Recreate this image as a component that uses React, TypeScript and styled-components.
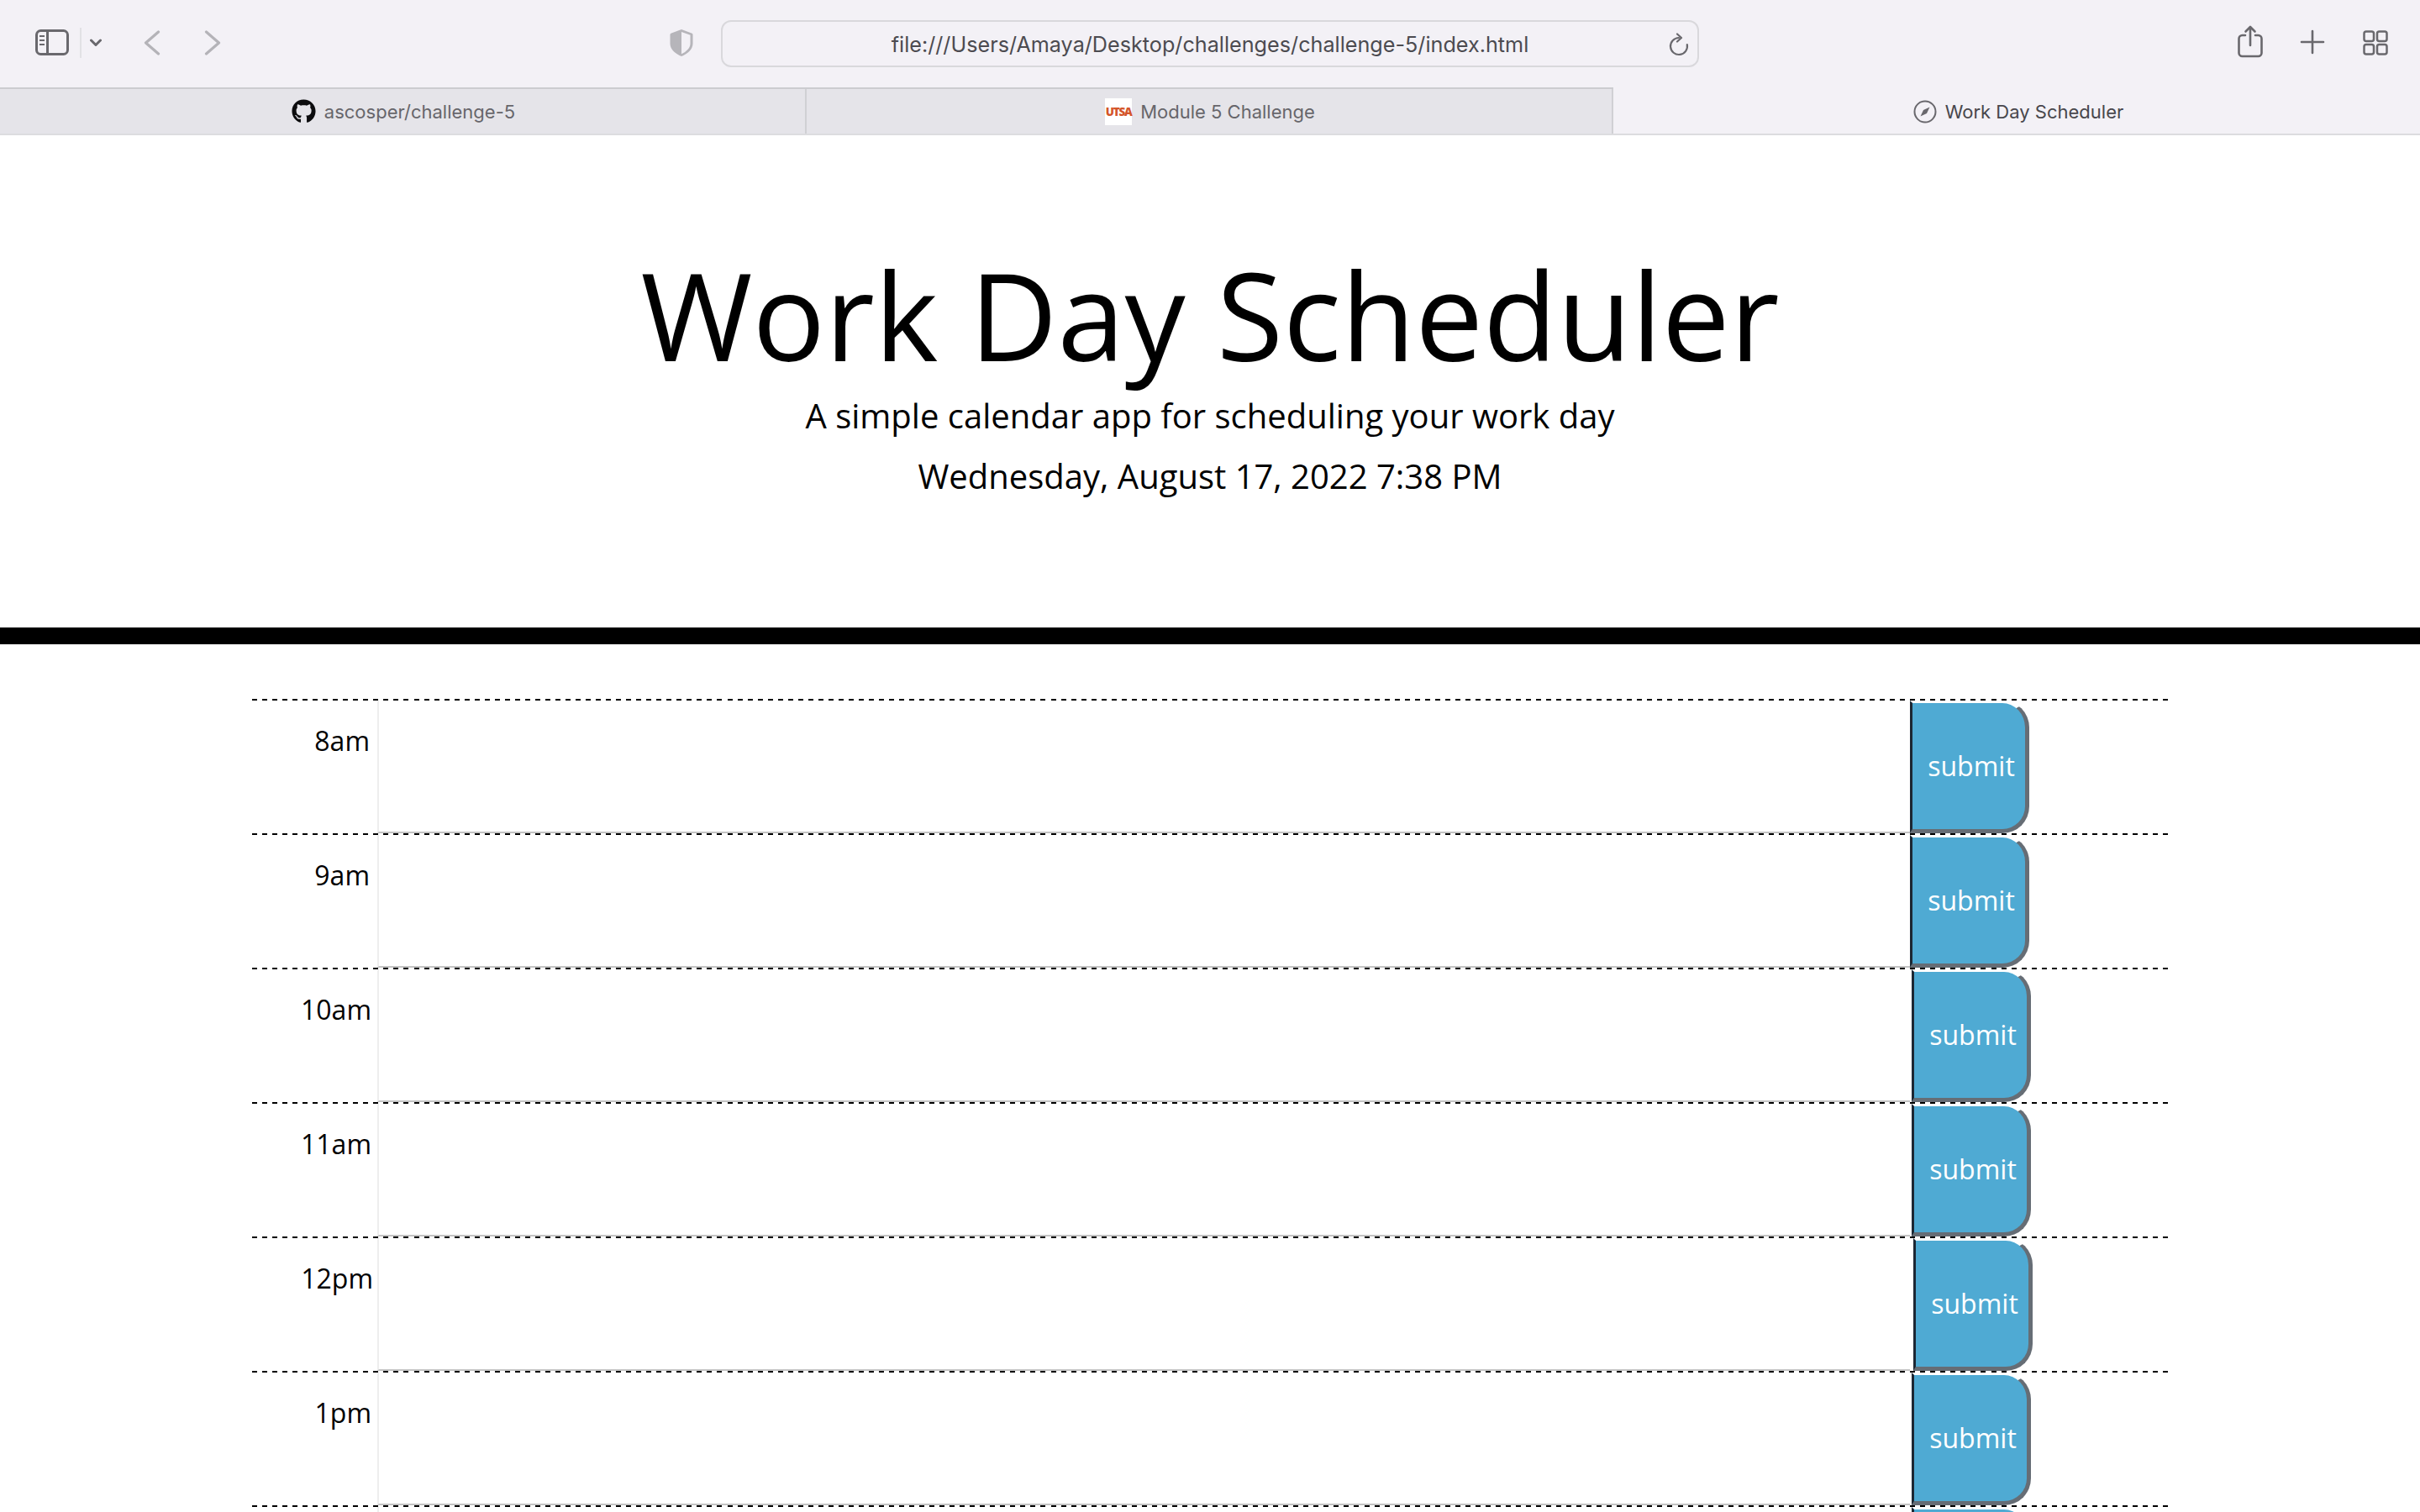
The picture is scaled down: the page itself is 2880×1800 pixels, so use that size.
import React from "react";
import styled, { createGlobalStyle } from "styled-components";
import { FaGithub } from "react-icons/fa";

const Global = createGlobalStyle`
  html, body { margin: 0; padding: 0; height: 100%; overflow: hidden; background: #fff; }
  #root { height: 100%; }
  * { box-sizing: border-box; }
`;

const Page = styled.div`
  display: flex;
  flex-direction: column;
  height: 1800px;
  overflow: hidden;
  font-family: "Open Sans", sans-serif;
  color: #000;
`;

const Toolbar = styled.div`
  height: 104px;
  flex: none;
  display: grid;
  grid-template-columns: 858px 1164px 1fr;
  align-items: center;
  background: #f3f1f6;
`;

const LeftTools = styled.div`
  display: flex;
  align-items: center;
  height: 100%;
  padding: 0 0 2px 42px;
`;

const RightTools = styled.div`
  display: flex;
  align-items: center;
  justify-content: flex-end;
  padding-right: 38px;
`;

const ToolIcon = styled.svg<{ $ml?: number; $lift?: number }>`
  display: block;
  flex: none;
  margin-left: ${(p) => p.$ml ?? 0}px;
  margin-bottom: ${(p) => p.$lift ?? 0}px;
`;

const ToolDivider = styled.span`
  width: 2px;
  height: 36px;
  flex: none;
  margin-left: 13px;
  background: #e2e1e5;
`;

const UrlBar = styled.div`
  position: relative;
  height: 56px;
  margin-top: -1px;
  padding-top: 2px;
  border: 2px solid #d9d8dc;
  border-radius: 12px;
  display: flex;
  align-items: center;
  justify-content: center;
  font-family: Inter, "Liberation Sans", sans-serif;
  font-size: 25.2px;
  color: #4c4b50;
`;

const Reload = styled.svg`
  position: absolute;
  right: 8px;
  top: 13px;
`;

const TabBar = styled.div`
  height: 57px;
  flex: none;
  display: grid;
  grid-template-columns: repeat(3, 960px);
  background: #e5e4e9;
  border-top: 2px solid #ccccd0;
  border-bottom: 2px solid #dcdcdf;
`;

const Tab = styled.div<{ $active?: boolean }>`
  display: flex;
  align-items: center;
  justify-content: center;
  gap: 10px;
  padding: ${(p) => (p.$active ? "2px 0 0 4px" : "0 0 0 2px")};
  font-family: Inter, "Liberation Sans", sans-serif;
  font-size: 22px;
  color: ${(p) => (p.$active ? "#48474c" : "#67666b")};
  background: ${(p) => (p.$active ? "#f3f1f6" : "transparent")};
  border-right: ${(p) => (p.$active ? "none" : "2px solid #d0d0d4")};
  margin-top: ${(p) => (p.$active ? "-2px" : "0")};
`;

const UtsaBadge = styled.span`
  width: 32px;
  height: 32px;
  background: #fff;
  color: #d4552a;
  font-family: "Open Sans", sans-serif;
  font-size: 13.5px;
  font-weight: 800;
  letter-spacing: -1.2px;
  display: flex;
  align-items: center;
  justify-content: center;
`;

const Header = styled.header`
  height: 606px;
  flex: none;
  padding-top: 127px;
  text-align: center;
  border-bottom: 20px solid #000;
`;

const Title = styled.h1`
  margin: 0 0 4px;
  font-size: 144px;
  font-weight: 400;
  line-height: 1.2;
`;

const Lead = styled.p`
  margin: 0;
  font-size: 40px;
  line-height: 60px;
`;

const DateLine = styled.p`
  margin: 12px 0 0;
  font-size: 40px;
  line-height: 60px;
`;

const Schedule = styled.main`
  width: 2280px;
  margin: 65px auto 0;
  flex: none;
`;

const Row = styled.section`
  height: 160px;
  display: flex;
  padding-top: 2px;
  background: repeating-linear-gradient(90deg, #000 0 6px, transparent 6px 12.032px) top left / 100% 2px no-repeat;
`;

const Hour = styled.div<{ $pad: number }>`
  width: 149px;
  flex: none;
  padding: 24px ${(p) => p.$pad}px 0 0;
  text-align: right;
  font-size: 32px;
  line-height: 48px;
`;

const Entry = styled.textarea`
  flex: 1;
  min-width: 0;
  display: block;
  height: 158px;
  padding: 8px;
  border: none;
  border-left: 2px solid #eeeeee;
  border-bottom: 2px solid #c4c4c4;
  outline: none;
  resize: none;
  background: transparent;
  font: inherit;
`;

const Submit = styled.button<{ $offset: number }>`
  flex: none;
  width: 142px;
  height: 158px;
  margin: 0 ${(p) => 165 - p.$offset}px 0 ${(p) => p.$offset}px;
  padding: 0 0 0 6px;
  border-style: solid;
  border-width: 3px 5px 5px 3px;
  border-color: #fff #666d75 #666d75 #1c2733;
  border-radius: 0 32px 32px 0;
  background: #4faad3;
  color: #fff;
  font-family: "Open Sans", sans-serif;
  font-size: 32px;
  line-height: 48px;
`;

const hours = [
  { label: "8am", pad: 9, offset: 0 },
  { label: "9am", pad: 9, offset: 0 },
  { label: "10am", pad: 7, offset: 2 },
  { label: "11am", pad: 7, offset: 2 },
  { label: "12pm", pad: 5, offset: 4 },
  { label: "1pm", pad: 7, offset: 2 },
];

export default function App() {
  return (
    <Page>
      <Global />
      <Toolbar>
        <LeftTools>
          <ToolIcon width="40" height="32" viewBox="0 0 40 32" fill="none" stroke="#69686d" strokeWidth="3">
            <rect x="1.5" y="1.5" width="37" height="28" rx="5" />
            <path d="M14.5 1.5v28" />
            <path d="M5 8h6M5 13h6M5 18h6" strokeWidth="2" />
          </ToolIcon>
          <ToolDivider />
          <ToolIcon $ml={10} width="14" height="10" viewBox="0 0 14 10" fill="none" stroke="#69686d" strokeWidth="3" strokeLinecap="round" strokeLinejoin="round">
            <path d="M1.500 2L7 7.500 12.500 2" />
          </ToolIcon>
          <ToolIcon $ml={50} width="20" height="30" viewBox="0 0 20 30" fill="none" stroke="#b4b3b8" strokeWidth="3.200" strokeLinecap="round" strokeLinejoin="round">
            <path d="M17.500 2L2.500 15l15 13" />
          </ToolIcon>
          <ToolIcon $ml={52} width="20" height="30" viewBox="0 0 20 30" fill="none" stroke="#b4b3b8" strokeWidth="3.200" strokeLinecap="round" strokeLinejoin="round">
            <path d="M2.500 2l15 13-15 13" />
          </ToolIcon>
          <ToolIcon $ml={534} width="28" height="34" viewBox="0 0 28 34" fill="none">
            <path d="M14 1L26 5.500c1 .4 1.500 1 1.500 2V18c0 7-7 12.500-13.500 15C7.500 30.500.5 25 .5 18V7.500c0-1 .5-1.600 1.500-2z" fill="#b6b5ba" />
            <path d="M14 4l10.500 3.800V18c0 5.500-5.500 10-10.500 12.300z" fill="#f3f1f6" />
          </ToolIcon>
        </LeftTools>
        <UrlBar>
          file:///Users/Amaya/Desktop/challenges/challenge-5/index.html
          <Reload width="26" height="30" viewBox="0 0 26 30" fill="none" stroke="#69686d" strokeWidth="2.200" strokeLinecap="round" strokeLinejoin="round">
            <path d="M21.800 14A10 10 0 1 1 12 6" />
            <path d="M10 1.500L15 6l-5 4.500" />
          </Reload>
        </UrlBar>
        <RightTools>
          <ToolIcon $lift={5} width="30" height="39" viewBox="0 0 30 39" fill="none" stroke="#69686d" strokeWidth="2.600" strokeLinecap="round" strokeLinejoin="round">
            <path d="M9 12H5.500a4 4 0 0 0-4 4V33a4 4 0 0 0 4 4h19a4 4 0 0 0 4-4V16a4 4 0 0 0-4-4H21" />
            <path d="M15 24V2.500M9.500 7.500L15 2l5.500 5.500" />
          </ToolIcon>
          <ToolIcon $ml={44} $lift={4} width="30" height="30" viewBox="0 0 30 30" fill="none" stroke="#69686d" strokeWidth="2.600" strokeLinecap="round">
            <path d="M15 2v26M2 15h26" />
          </ToolIcon>
          <ToolIcon $ml={45} $lift={2} width="30" height="30" viewBox="0 0 30 30" fill="none" stroke="#69686d" strokeWidth="2.500">
            <rect x="1.500" y="1.500" width="11.500" height="11.500" rx="2.500" />
            <rect x="17" y="1.500" width="11.500" height="11.500" rx="2.500" />
            <rect x="1.500" y="17" width="11.500" height="11.500" rx="2.500" />
            <rect x="17" y="17" width="11.500" height="11.500" rx="2.500" />
          </ToolIcon>
        </RightTools>
      </Toolbar>
      <TabBar>
        <Tab>
          <FaGithub size={29} color="#0c0c0e" />
          ascosper/challenge-5
        </Tab>
        <Tab>
          <UtsaBadge>UTSA</UtsaBadge>
          Module 5 Challenge
        </Tab>
        <Tab $active>
          <ToolIcon width="28" height="28" viewBox="0 0 28 28" fill="none">
            <circle cx="14" cy="14" r="12.500" stroke="#69686d" strokeWidth="2" />
            <path d="M19.500 8.500L16 16l-7.500 3.500L12 12z" fill="#69686d" />
          </ToolIcon>
          Work Day Scheduler
        </Tab>
      </TabBar>
      <Header>
        <Title>Work Day Scheduler</Title>
        <Lead>A simple calendar app for scheduling your work day</Lead>
        <DateLine>Wednesday, August 17, 2022 7:38 PM</DateLine>
      </Header>
      <Schedule>
        {hours.map((h) => (
          <Row key={h.label}>
            <Hour $pad={h.pad}>{h.label}</Hour>
            <Entry aria-label={h.label} />
            <Submit $offset={h.offset}>submit</Submit>
          </Row>
        ))}
        <Row>
          <Hour $pad={7} />
          <Entry aria-label="2pm" />
          <Submit $offset={2} aria-label="submit" />
        </Row>
      </Schedule>
    </Page>
  );
}
